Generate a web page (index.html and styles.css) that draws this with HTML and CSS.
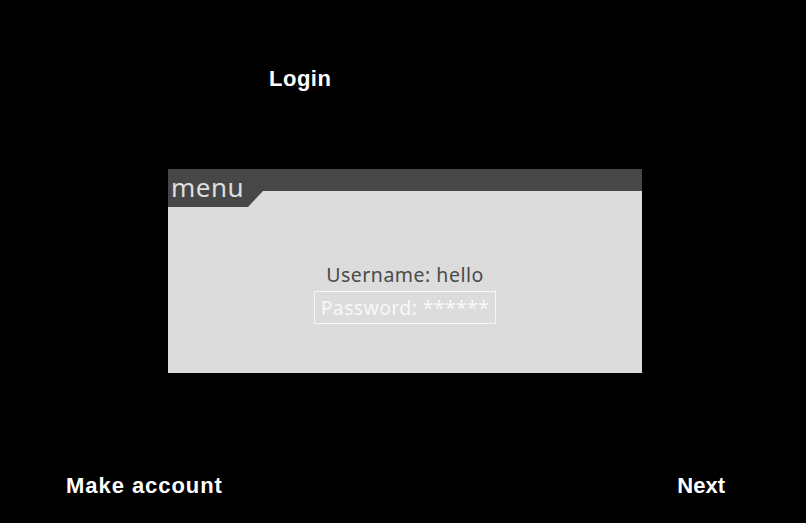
FILE: index.html
```html
<!DOCTYPE html>
<html>
<head>
<meta charset="utf-8">
<link rel="stylesheet" href="styles.css">
</head>
<body>
<div class="screen">
  <div class="title-row"><span class="title">Login</span></div>
  <div class="panel">
    <div class="tab"><span class="tab-label">menu</span></div>
    <div class="panel-body">
      <div class="field">Username: hello</div>
      <div class="field field-active">Password: ******</div>
    </div>
  </div>
  <div class="footer">
    <span class="btn btn-make">Make account</span>
    <span class="btn">Next</span>
  </div>
</div>
</body>
</html>
```
FILE: styles.css
```css
html, body {
  margin: 0;
  padding: 0;
  background: #000;
}
.screen {
  width: 806px;
  height: 523px;
  display: flex;
  flex-direction: column;
  background: #000;
  font-family: "Liberation Sans", Arial, sans-serif;
}
.title-row {
  padding-top: 66px;
  padding-left: 269px;
  height: 25px;
}
.title {
  display: block;
  font-weight: bold;
  font-size: 22px;
  line-height: 25px;
  color: #fff;
  letter-spacing: 0.5px;
}
.panel {
  margin-top: 78px;
  margin-left: 168px;
  width: 474px;
  height: 204px;
  background: linear-gradient(#474747 0 22px, #dcdcdc 22px);
  display: flex;
  flex-direction: column;
}
.tab {
  width: 95px;
  height: 38px;
  background: #474747;
  clip-path: polygon(0 0, 95px 0, 95px 22px, 80px 38px, 0 38px);
  box-sizing: border-box;
  padding-top: 1px;
  padding-left: 3px;
}
.tab-label {
  display: block;
  font-family: "Noto Sans", "Open Sans", sans-serif;
  font-size: 26px;
  line-height: 34px;
  letter-spacing: 0.5px;
  color: #dedede;
}
.panel-body {
  display: flex;
  flex-direction: column;
  align-items: center;
  padding-top: 55px;
  gap: 2px;
}
.field {
  font-family: "Noto Sans", "Open Sans", sans-serif;
  font-size: 19.5px;
  line-height: 26px;
  letter-spacing: 0.5px;
  color: #4a4a4a;
  border: 1px solid transparent;
  padding: 0 5px;
  margin-top: -1px;
}
.field-active {
  margin-top: 0;
  color: #f8f8f8;
  border-color: #f6f6f6;
  padding: 3px 6px 2px 6px;
  letter-spacing: 0.35px;
}
.footer {
  margin-top: 100px;
  display: flex;
  justify-content: space-between;
  padding: 0 81px 0 66px;
}
.btn {
  font-weight: bold;
  font-size: 22px;
  line-height: 25px;
  color: #fff;
}
.btn-make {
  letter-spacing: 0.95px;
}
```
